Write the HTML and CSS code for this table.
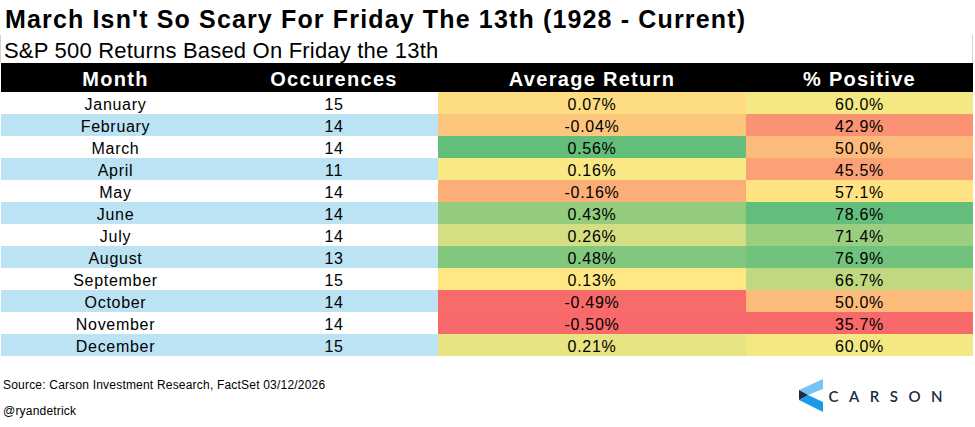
FILE: index.html
```html
<!DOCTYPE html>
<html>
<head>
<meta charset="utf-8">
<link rel="stylesheet" href="styles.css">
</head>
<body>
<div class="page">
  <h1 class="title">March Isn't So Scary For Friday The 13th (1928 - Current)</h1>
  <div class="subtitle">S&amp;P 500 Returns Based On Friday the 13th</div>
  <table class="data">
    <colgroup>
      <col class="c-month"><col class="c-occ"><col class="c-avg"><col class="c-pos">
    </colgroup>
    <thead>
      <tr><th>Month</th><th>Occurences</th><th>Average Return</th><th>% Positive</th></tr>
    </thead>
    <tbody>
      <tr><td>January</td><td>15</td><td style="background:#FEDC81">0.07%</td><td style="background:#F4E883">60.0%</td></tr>
      <tr class="alt"><td>February</td><td>14</td><td style="background:#FDC67D">-0.04%</td><td style="background:#FA9273">42.9%</td></tr>
      <tr><td>March</td><td>14</td><td style="background:#63BE7B">0.56%</td><td style="background:#FCBA7B">50.0%</td></tr>
      <tr class="alt"><td>April</td><td>11</td><td style="background:#F9E984">0.16%</td><td style="background:#FBA176">45.5%</td></tr>
      <tr><td>May</td><td>14</td><td style="background:#FCAE78">-0.16%</td><td style="background:#FFE382">57.1%</td></tr>
      <tr class="alt"><td>June</td><td>14</td><td style="background:#94CC7E">0.43%</td><td style="background:#63BE7B">78.6%</td></tr>
      <tr><td>July</td><td>14</td><td style="background:#D4DE82">0.26%</td><td style="background:#9BCE7E">71.4%</td></tr>
      <tr class="alt"><td>August</td><td>13</td><td style="background:#81C77D">0.48%</td><td style="background:#70C27C">76.9%</td></tr>
      <tr><td>September</td><td>15</td><td style="background:#FFE883">0.13%</td><td style="background:#C0D980">66.7%</td></tr>
      <tr class="alt"><td>October</td><td>14</td><td style="background:#F86B6B">-0.49%</td><td style="background:#FCBA7B">50.0%</td></tr>
      <tr><td>November</td><td>14</td><td style="background:#F8696B">-0.50%</td><td style="background:#F8696B">35.7%</td></tr>
      <tr class="alt"><td>December</td><td>15</td><td style="background:#E7E483">0.21%</td><td style="background:#F4E883">60.0%</td></tr>
    </tbody>
  </table>
  <div class="footer">
    <div class="notes">
      <div class="source">Source: Carson Investment Research, FactSet 03/12/2026</div>
      <div class="handle">@ryandetrick</div>
    </div>
    <div class="logo">
      <svg class="logo-mark" width="24" height="33" viewBox="0 0 24 33">
        <polygon points="0,21 9,16 24,23 24,33" fill="#1C9BEA"/>
        <polygon points="0,11 24,0 24,10 9,16" fill="#74C4F4"/>
        <polygon points="0,11 9,16 0,21" fill="#1B2B40"/>
      </svg>
      <span class="logo-text">CARSON</span>
    </div>
  </div>
</div>
</body>
</html>
```

FILE: styles.css
```css
html, body {
  margin: 0;
  padding: 0;
  background: #ffffff;
}

.page {
  width: 975px;
  height: 427px;
  font-family: "Liberation Sans", Arial, sans-serif;
  color: #000000;
  overflow: hidden;
}

.title {
  margin: 0;
  height: 35px;
  padding: 6px 0 0 5px;
  box-sizing: border-box;
  font-size: 25px;
  line-height: 27px;
  font-weight: bold;
  letter-spacing: 1.15px;
  white-space: nowrap;
}

.subtitle {
  height: 28px;
  margin-right: 2px;
  padding: 3px 0 0 3px;
  box-sizing: border-box;
  border-left: 1px solid #d4d4d4;
  border-right: 1px solid #d4d4d4;
  font-size: 22px;
  line-height: 25px;
  letter-spacing: 0.2px;
  white-space: nowrap;
}

.data {
  margin-left: 1px;
  width: 972px;
  border-collapse: collapse;
  table-layout: fixed;
}

.c-month { width: 229px; }
.c-occ { width: 208px; }
.c-avg { width: 308px; }
.c-pos { width: 227px; }

.data th {
  background: #000000;
  color: #ffffff;
  font-size: 20px;
  font-weight: bold;
  letter-spacing: 1.3px;
  height: 26px;
  line-height: 26px;
  padding: 3px 0 0 0;
  text-align: center;
}

.data td {
  height: 19px;
  line-height: 19px;
  padding: 3px 0 0 0;
  font-size: 16px;
  letter-spacing: 0.7px;
  text-align: center;
  background: #ffffff;
}

.data tr.alt td:nth-child(1),
.data tr.alt td:nth-child(2) {
  background: #BCE3F4;
}

.footer {
  display: flex;
  justify-content: space-between;
  align-items: flex-start;
}

.notes {
  padding: 22px 0 0 3px;
}

.source {
  font-size: 12px;
  line-height: 14px;
  letter-spacing: 0.2px;
}

.handle {
  margin-top: 12px;
  font-size: 12px;
  line-height: 14px;
  letter-spacing: 0.2px;
}

.logo {
  display: flex;
  align-items: center;
  gap: 5px;
  margin-top: 23px;
  margin-right: 22px;
}

.logo-mark {
  display: block;
}

.logo-text {
  font-family: Lato, "Liberation Sans", sans-serif;
  font-weight: 600;
  font-size: 15px;
  letter-spacing: 10.5px;
  color: #1B2B40;
}
```
